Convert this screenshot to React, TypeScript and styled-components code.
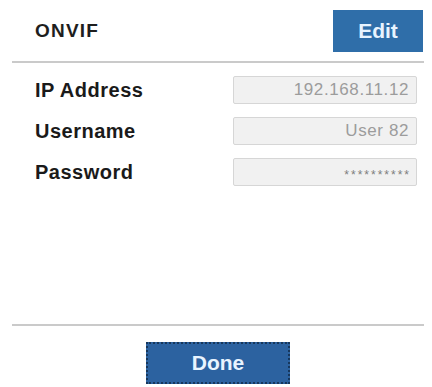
import React from "react";
import styled, { createGlobalStyle } from "styled-components";

const Global = createGlobalStyle`
  html, body { margin: 0; padding: 0; background: #ffffff; }
  body { font-family: "Liberation Sans", Arial, sans-serif; }
`;

const Page = styled.div`
  width: 432px;
  height: 387px;
  box-sizing: border-box;
  padding: 0 8px 0 12px;
  display: flex;
  flex-direction: column;
  background: #fff;
`;

const Header = styled.div`
  height: 61px;
  box-sizing: border-box;
  padding: 10px 1px 0 23px;
  display: flex;
  align-items: flex-start;
  justify-content: space-between;
`;

const Title = styled.div`
  height: 42px;
  display: flex;
  align-items: center;
  font-size: 19px;
  font-weight: 700;
  letter-spacing: 1.2px;
  color: #1e1e1e;
`;

const Button = styled.button<{ $w: number; $dotted?: boolean }>`
  width: ${(p) => p.$w}px;
  height: 42px;
  margin: 0;
  padding: 0;
  box-sizing: border-box;
  border: ${(p) => (p.$dotted ? "2px dotted #17375c" : "0")};
  border-radius: 0;
  background: ${(p) => (p.$dotted ? "#2c62a0" : "#2f6ea9")};
  color: #e8f4ff;
  font-family: "Liberation Sans", Arial, sans-serif;
  font-size: 21px;
  font-weight: 700;
  display: flex;
  align-items: center;
  justify-content: center;
`;

const Divider = styled.div`
  height: 2px;
  background: #cacaca;
  flex: none;
`;

const Form = styled.div`
  padding: 13px 7px 0 23px;
  display: flex;
  flex-direction: column;
  gap: 13px;
`;

const Row = styled.div`
  display: flex;
  align-items: center;
  justify-content: space-between;
  height: 28px;
`;

const Label = styled.div`
  font-size: 20px;
  font-weight: 700;
  letter-spacing: 0.5px;
  color: #1a1a1a;
`;

const Field = styled.div<{ $secret?: boolean }>`
  width: 184px;
  height: 28px;
  box-sizing: border-box;
  border: 1px solid #d6d6d6;
  border-radius: 2px;
  background: #f1f1f1;
  display: flex;
  align-items: center;
  justify-content: flex-end;
  padding: ${(p) => (p.$secret ? "6px 5px 0 0" : "0 7px 0 0")};
  color: ${(p) => (p.$secret ? "#7e7e7e" : "#9c9c9c")};
  font-size: ${(p) => (p.$secret ? "12px" : "17px")};
  letter-spacing: ${(p) => (p.$secret ? "2px" : "0.6px")};
`;

const Spacer = styled.div`
  flex: 1;
`;

const Footer = styled.div`
  padding: 16px 0 3px;
  display: flex;
  justify-content: center;
`;

export default function App() {
  return (
    <>
      <Global />
      <Page>
        <Header>
          <Title>ONVIF</Title>
          <Button $w={90}>Edit</Button>
        </Header>
        <Divider />
        <Form>
          <Row>
            <Label>IP Address</Label>
            <Field>192.168.11.12</Field>
          </Row>
          <Row>
            <Label>Username</Label>
            <Field>User 82</Field>
          </Row>
          <Row>
            <Label>Password</Label>
            <Field $secret>**********</Field>
          </Row>
        </Form>
        <Spacer />
        <Divider />
        <Footer>
          <Button $w={144} $dotted>
            Done
          </Button>
        </Footer>
      </Page>
    </>
  );
}
